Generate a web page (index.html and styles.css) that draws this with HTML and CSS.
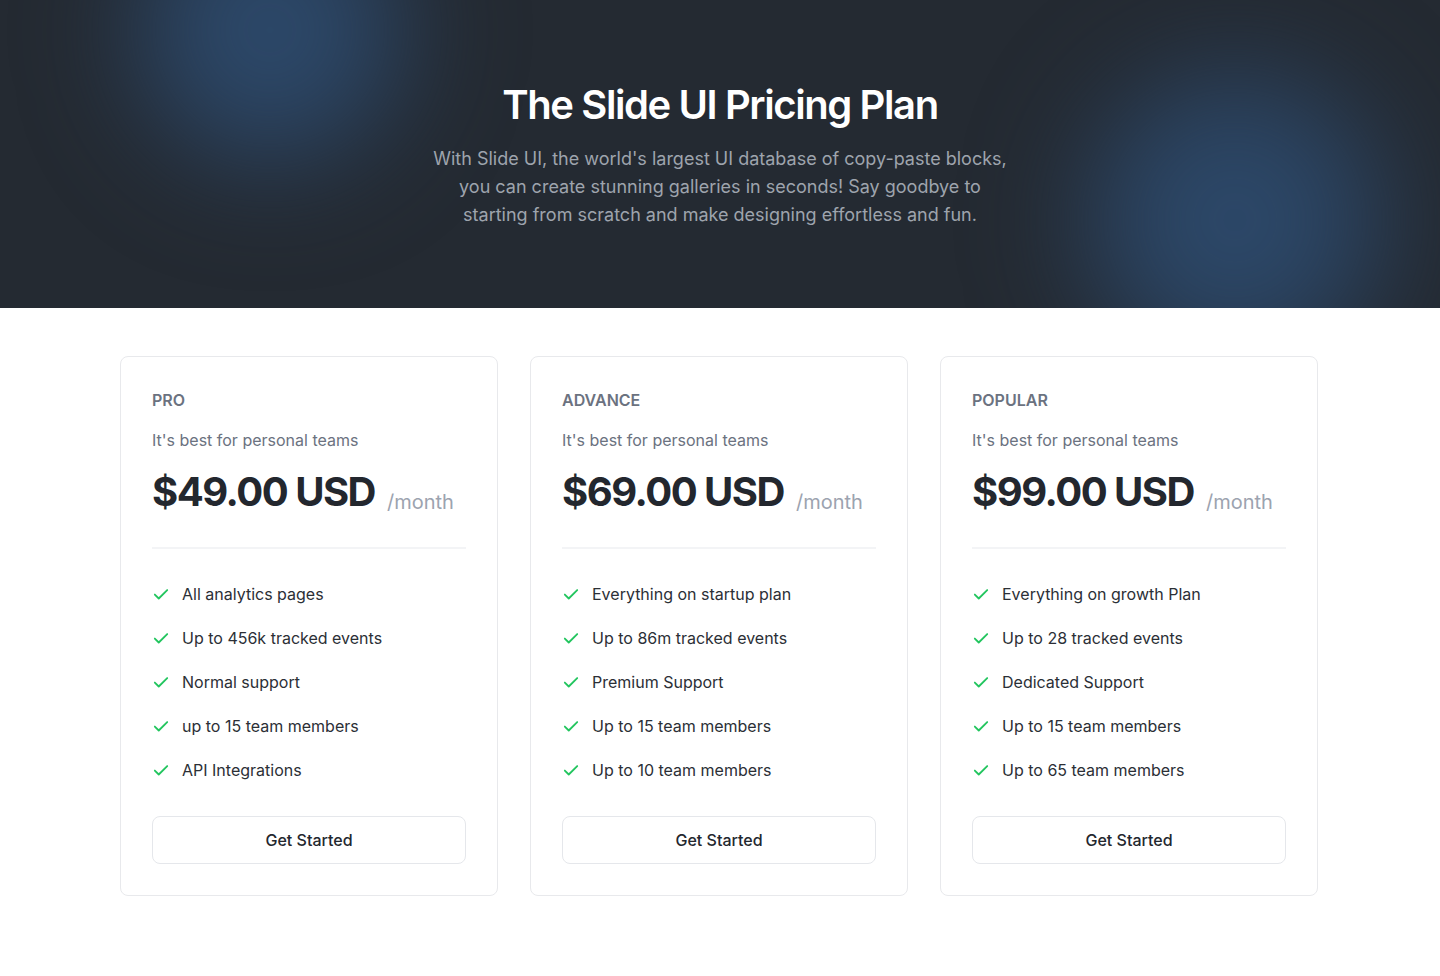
FILE: index.html
```html
<!DOCTYPE html>
<html lang="en">
<head>
<meta charset="utf-8">
<title>The Slide UI Pricing Plan</title>
<link rel="stylesheet" href="styles.css">
</head>
<body>
<header class="hero">
  <div class="blob blob-left"></div>
  <div class="blob blob-right"></div>
  <div class="hero-inner">
    <h1 class="hero-title">The Slide UI Pricing Plan</h1>
    <p class="hero-text">With Slide UI, the world's largest UI database of copy-paste blocks, you can create stunning galleries in seconds! Say goodbye to starting from scratch and make designing effortless and fun.</p>
  </div>
</header>

<main class="plans">
  <section class="card">
    <h2 class="plan-name">PRO</h2>
    <p class="plan-desc">It's best for personal teams</p>
    <div class="price-row"><span class="price">$49.00 USD</span><span class="period">/month</span></div>
    <hr class="divider">
    <ul class="features">
      <li><svg class="check" viewBox="0 0 16 16"><path d="M2.5 8.5l3.5 3.5 7.5-7.5"/></svg>All analytics pages</li>
      <li><svg class="check" viewBox="0 0 16 16"><path d="M2.5 8.5l3.5 3.5 7.5-7.5"/></svg>Up to 456k tracked events</li>
      <li><svg class="check" viewBox="0 0 16 16"><path d="M2.5 8.5l3.5 3.5 7.5-7.5"/></svg>Normal support</li>
      <li><svg class="check" viewBox="0 0 16 16"><path d="M2.5 8.5l3.5 3.5 7.5-7.5"/></svg>up to 15 team members</li>
      <li><svg class="check" viewBox="0 0 16 16"><path d="M2.5 8.5l3.5 3.5 7.5-7.5"/></svg>API Integrations</li>
    </ul>
    <button class="btn">Get Started</button>
  </section>

  <section class="card">
    <h2 class="plan-name">ADVANCE</h2>
    <p class="plan-desc">It's best for personal teams</p>
    <div class="price-row"><span class="price">$69.00 USD</span><span class="period">/month</span></div>
    <hr class="divider">
    <ul class="features">
      <li><svg class="check" viewBox="0 0 16 16"><path d="M2.5 8.5l3.5 3.5 7.5-7.5"/></svg>Everything on startup plan</li>
      <li><svg class="check" viewBox="0 0 16 16"><path d="M2.5 8.5l3.5 3.5 7.5-7.5"/></svg>Up to 86m tracked events</li>
      <li><svg class="check" viewBox="0 0 16 16"><path d="M2.5 8.5l3.5 3.5 7.5-7.5"/></svg>Premium Support</li>
      <li><svg class="check" viewBox="0 0 16 16"><path d="M2.5 8.5l3.5 3.5 7.5-7.5"/></svg>Up to 15 team members</li>
      <li><svg class="check" viewBox="0 0 16 16"><path d="M2.5 8.5l3.5 3.5 7.5-7.5"/></svg>Up to 10 team members</li>
    </ul>
    <button class="btn">Get Started</button>
  </section>

  <section class="card">
    <h2 class="plan-name">POPULAR</h2>
    <p class="plan-desc">It's best for personal teams</p>
    <div class="price-row"><span class="price">$99.00 USD</span><span class="period">/month</span></div>
    <hr class="divider">
    <ul class="features">
      <li><svg class="check" viewBox="0 0 16 16"><path d="M2.5 8.5l3.5 3.5 7.5-7.5"/></svg>Everything on growth Plan</li>
      <li><svg class="check" viewBox="0 0 16 16"><path d="M2.5 8.5l3.5 3.5 7.5-7.5"/></svg>Up to 28 tracked events</li>
      <li><svg class="check" viewBox="0 0 16 16"><path d="M2.5 8.5l3.5 3.5 7.5-7.5"/></svg>Dedicated Support</li>
      <li><svg class="check" viewBox="0 0 16 16"><path d="M2.5 8.5l3.5 3.5 7.5-7.5"/></svg>Up to 15 team members</li>
      <li><svg class="check" viewBox="0 0 16 16"><path d="M2.5 8.5l3.5 3.5 7.5-7.5"/></svg>Up to 65 team members</li>
    </ul>
    <button class="btn">Get Started</button>
  </section>
</main>
</body>
</html>
```

FILE: styles.css
```css
* { box-sizing: border-box; }

html, body {
  margin: 0;
  padding: 0;
  background: #ffffff;
  font-family: Inter, "Noto Sans", "Liberation Sans", sans-serif;
  color: #1f2328;
}

.hero {
  position: relative;
  overflow: hidden;
  background: #242a32;
  height: 308px;
  padding: 81px 24px 0;
}

.blob {
  position: absolute;
  border-radius: 50%;
  filter: blur(50px);
  pointer-events: none;
}

.blob-left {
  width: 320px;
  height: 320px;
  left: 110px;
  top: -130px;
  background: radial-gradient(circle, rgba(46, 78, 115, 0.95) 0%, rgba(44, 72, 106, 0.85) 45%, rgba(36, 42, 50, 0) 75%);
}

.blob-right {
  width: 360px;
  height: 360px;
  left: 1055px;
  top: 40px;
  background: radial-gradient(circle, rgba(46, 78, 115, 0.95) 0%, rgba(44, 72, 106, 0.8) 45%, rgba(36, 42, 50, 0) 75%);
}

.hero-inner {
  position: relative;
  text-align: center;
}

.hero-title {
  margin: 0 0 16px;
  font-size: 40px;
  line-height: 48px;
  font-weight: 600;
  letter-spacing: -1.4px;
  color: #ffffff;
}

.hero-text {
  margin: 0 auto;
  max-width: 590px;
  font-size: 18px;
  line-height: 28px;
  color: #9ea4ad;
}

.plans {
  display: grid;
  grid-template-columns: repeat(3, 378px);
  gap: 32px;
  padding: 0 120px;
  margin: 48px 0 0;
}

.card {
  border: 1px solid #e8e9ec;
  border-radius: 8px;
  padding: 31px;
  display: flex;
  flex-direction: column;
}

.plan-name {
  margin: 0;
  font-size: 16px;
  line-height: 24px;
  font-weight: 600;
  color: #6b7280;
}

.plan-desc {
  margin: 16px 0 0;
  font-size: 16px;
  line-height: 24px;
  color: #6b7280;
}

.price-row {
  margin-top: 16px;
  display: flex;
  align-items: flex-end;
  gap: 12px;
  height: 48px;
}

.price {
  font-size: 40px;
  line-height: 48px;
  font-weight: 700;
  letter-spacing: -1.5px;
  color: #23272e;
}

.period {
  font-size: 20px;
  line-height: 28px;
  color: #9ca3af;
}

.divider {
  margin: 31px 0 33px;
  border: 0;
  height: 2px;
  background: #f3f4f6;
}

.features {
  list-style: none;
  margin: 0;
  padding: 0;
  display: flex;
  flex-direction: column;
  gap: 20px;
}

.features li {
  display: flex;
  align-items: center;
  gap: 12px;
  font-size: 16px;
  line-height: 24px;
  color: #2b2f36;
}

.check {
  width: 18px;
  height: 18px;
  flex: none;
  fill: none;
  stroke: #22c55e;
  stroke-width: 1.6;
  stroke-linecap: round;
  stroke-linejoin: round;
}

.btn {
  margin-top: 34px;
  height: 48px;
  width: 100%;
  border: 1px solid #e5e7eb;
  border-radius: 8px;
  background: #ffffff;
  font-family: inherit;
  font-size: 16px;
  font-weight: 500;
  color: #23272e;
  cursor: pointer;
}
```
